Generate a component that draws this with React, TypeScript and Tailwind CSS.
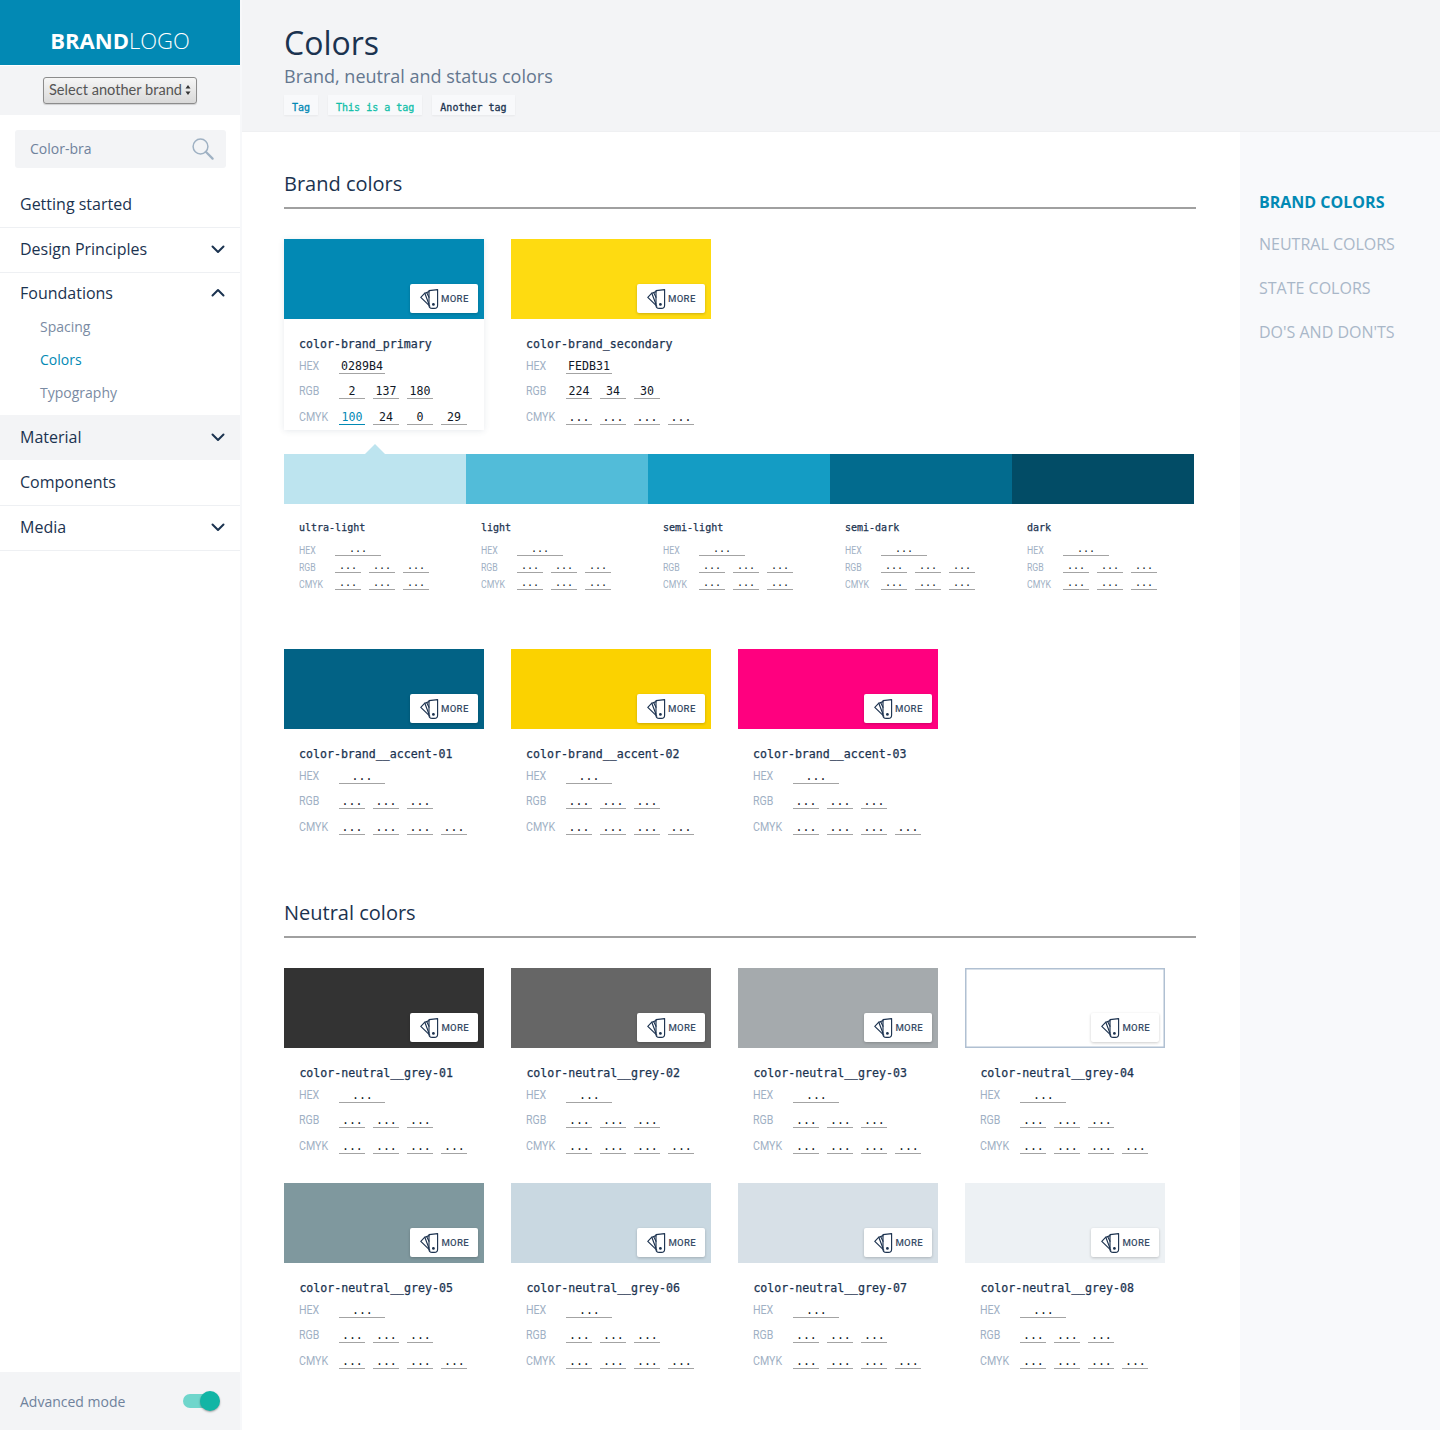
const NAVY = "text-[#1b3350]";

function FanIcon() {
  return (
    <svg width="19" height="20" viewBox="0 0 19 20" fill="none" stroke="#1d3350" strokeWidth="1.15" strokeLinejoin="round" strokeLinecap="round" className="shrink-0">
      <path d="M9 1.6 17.6.6v15.6a3.2 3.2 0 0 1-3.2 3.2h-2.2A3.2 3.2 0 0 1 9 16.2z" />
      <path d="M9 2.6 4.8 4.2l4.2 11" />
      <path d="M4.8 4.2.8 8.4l9 8.8" />
      <path d="M6.6 3.6 9 8.2" />
      <circle cx="13.4" cy="15.4" r="1.4" fill="#1d3350" stroke="none" />
    </svg>
  );
}

function MoreButton() {
  return (
    <div className="absolute right-[6px] bottom-[6px] flex h-[29px] w-[68px] items-center gap-[2px] rounded-[2px] bg-white pl-[10px] shadow-[0_1px_3px_rgba(0,0,0,0.2)]">
      <FanIcon />
      <span className="pt-px font-['Roboto',sans-serif] text-[9.6px] font-medium tracking-[0.3px] text-[#3a4e68]">MORE</span>
    </div>
  );
}

function Cell({ v, wide, small, active }: { v: string; wide?: boolean; small?: boolean; active?: boolean }) {
  const w = wide ? "w-[46px]" : "w-[26px]";
  const color = active ? "text-[#0289b4] border-[#0289b4]" : "text-[#111827] border-[#a3a3a3]";
  const size = small ? "text-[10px] h-[12px] leading-[10px]" : "text-[11.6px] h-[15px] leading-[15px]";
  return <span className={`${w} ${color} ${size} block border-b text-center font-['DejaVu_Sans_Mono',monospace] whitespace-nowrap`}>{v}</span>;
}

function Row({ label, values, small, activeFirst }: { label: string; values: string[]; small?: boolean; activeFirst?: boolean }) {
  return (
    <div className={`flex items-center ${small ? "h-[17px]" : "h-[25.5px]"}`}>
      <span className={`${small ? "w-[36px] origin-left scale-x-[0.83] pt-[2px] text-[10.5px]" : "w-[40px] origin-left scale-x-[0.85] text-[12.5px]"} font-['Roboto',sans-serif] text-[#a0b0c4]`}>{label}</span>
      <div className="flex gap-2">
        {values.map((v, i) => (
          <Cell key={i} v={v} small={small} wide={label === "HEX"} active={activeFirst && label === "CMYK" && i === 0} />
        ))}
      </div>
    </div>
  );
}

type CardProps = {
  name: string;
  color: string;
  hex?: string;
  rgb?: string[];
  cmyk?: string[];
  selected?: boolean;
  bordered?: boolean;
};

function Card({ name, color, hex = "...", rgb = ["...", "...", "..."], cmyk = ["...", "...", "...", "..."], selected, bordered }: CardProps) {
  return (
    <div className={`w-[200px] ${selected ? "shadow-[0_1px_6px_rgba(60,80,110,0.12)]" : ""}`}>
      <div className={`relative h-[80px] ${color} ${bordered ? "shadow-[inset_0_0_0_1.5px_#b0c0d2]" : ""}`}>
        <MoreButton />
      </div>
      <div className="h-[111px] pl-[15px] pt-[15px]">
        <div className={`h-[19.5px] font-['DejaVu_Sans_Mono',monospace] text-[11.6px] leading-[21px] [-webkit-text-stroke:0.25px_#1b3350] ${NAVY}`}>{name}</div>
        <Row label="HEX" values={[hex]} />
        <Row label="RGB" values={rgb} />
        <Row label="CMYK" values={cmyk} activeFirst={selected} />
      </div>
    </div>
  );
}

function Shade({ name, color }: { name: string; color: string }) {
  return (
    <div className="w-[182px]">
      <div className={`h-[50px] ${color}`} />
      <div className="pl-[15px] pt-[15px]">
        <div className={`mb-[6.5px] h-4 font-['DejaVu_Sans_Mono',monospace] text-[10px] leading-[18px] [-webkit-text-stroke:0.25px_#1b3350] ${NAVY}`}>{name}</div>
        <Row small label="HEX" values={["..."]} />
        <Row small label="RGB" values={["...", "...", "..."]} />
        <Row small label="CMYK" values={["...", "...", "..."]} />
      </div>
    </div>
  );
}

function SectionTitle({ children }: { children: string }) {
  return (
    <div className="w-[912px] border-b-2 border-[#a0a0a0] pb-[9px]">
      <h2 className={`h-7 text-[20px] leading-7 ${NAVY}`}>{children}</h2>
    </div>
  );
}

function Chevron({ up }: { up?: boolean }) {
  return (
    <svg width="14" height="9" viewBox="0 0 14 9" fill="none" stroke="#1b3350" strokeWidth="2" strokeLinecap="round" strokeLinejoin="round" className="shrink-0">
      <path d={up ? "M1.5 7.5 7 2l5.5 5.5" : "M1.5 1.5 7 7l5.5-5.5"} />
    </svg>
  );
}

function NavRow({ label, chevron, h = "h-[45px]" }: { label: string; chevron?: boolean; h?: string }) {
  return (
    <div className={`flex ${h} items-center justify-between border-b border-[#eef0f3] pl-5 pr-[15px] pb-px text-[16px] ${NAVY}`}>
      <span className={chevron ? "pb-[2px]" : ""}>{label}</span>
      {chevron && <Chevron />}
    </div>
  );
}

export default function App() {
  return (
    <div className="flex h-[1430px] overflow-hidden bg-white font-['Open_Sans',sans-serif]">
      <aside className="z-10 flex w-[242px] shrink-0 flex-col border-r-2 border-[#f7f8fa]">
        <div className="flex h-[65px] items-end justify-center bg-[#0289b4] pb-[10px] text-[22px] leading-[30px] text-white">
          <span className="font-bold">BRAND</span>
          <span className="font-light">LOGO</span>
        </div>
        <div className="flex h-[50px] items-center justify-center border-t border-white bg-[#f3f4f6]">
          <div className="flex h-[27px] w-[154px] items-center justify-between rounded-[3px] border border-[#8c8c8c] bg-gradient-to-b from-[#f6f6f6] to-[#d9d9d9] pb-[2px] pl-[5px] pr-[5px] font-['Lato',sans-serif] text-[14.6px] text-[#555] shadow-[0_1px_1px_rgba(0,0,0,0.15)]">
            <span className="whitespace-nowrap">Select another brand</span>
            <svg width="6" height="12" viewBox="0 0 6 12" fill="#333">
              <path d="M3 1 5.5 4.5H.5zM3 11 .5 7.5h5z" />
            </svg>
          </div>
        </div>
        <div className="px-[15px] pt-[15px]">
          <div className="flex h-[38px] w-[211px] items-center justify-between rounded-[3px] bg-[#f3f4f6] pl-[15px] pr-[12px] text-[14px] text-[#6f829c]">
            <span className="pb-[2px]">Color-bra</span>
            <svg width="22" height="22" viewBox="0 0 22 22" fill="none" stroke="#9fb1c3" strokeLinecap="round">
              <circle cx="8.5" cy="8.5" r="7.4" strokeWidth="1.5" />
              <path d="M13.8 13.8 20.6 20.6" strokeWidth="2.2" />
            </svg>
          </div>
        </div>
        <div className="mt-[14px]">
          <NavRow label="Getting started" h="h-[46px]" />
          <NavRow label="Design Principles" chevron />
          <div className={`flex h-[37px] items-center justify-between pl-5 pr-[15px] pt-[2px] text-[16px] ${NAVY}`}>
            <span>Foundations</span>
            <Chevron up />
          </div>
          <div className="flex h-[105px] flex-col pl-10 text-[14px] text-[#7a8ba3]">
            <span className="flex h-[33px] items-center">Spacing</span>
            <span className="flex h-[33px] items-center text-[#0289b4]">Colors</span>
            <span className="flex h-[33px] items-center">Typography</span>
          </div>
          <div className={`flex h-[45px] items-center justify-between bg-[#f3f4f6] pl-5 pr-[15px] text-[16px] ${NAVY}`}>
            <span className="pb-[2px]">Material</span>
            <Chevron />
          </div>
          <NavRow label="Components" h="h-[46px]" />
          <NavRow label="Media" chevron />
        </div>
        <div className="mt-auto flex h-[58px] items-center justify-between bg-[#f3f4f6] pl-5 pr-[23px] text-[14px] text-[#6f829c]">
          <span>Advanced mode</span>
          <div className="relative h-[14px] w-[34px] rounded-full bg-[#6fd6cc]">
            <div className="absolute -top-[3px] right-[-3px] h-5 w-5 rounded-full bg-[#12b5a5] shadow-[0_1px_2px_rgba(0,0,0,0.35)]" />
          </div>
        </div>
      </aside>

      <main className="flex min-w-0 flex-1 flex-col">
        <header className="h-[132px] shrink-0 border-b border-[#eff0f2] bg-[#f3f4f6] pl-[42px] pt-[21px]">
          <h1 className={`h-[44px] text-[32px] leading-[44px] ${NAVY}`}>Colors</h1>
          <p className="h-[26px] text-[18px] leading-[22px] text-[#64778f]">Brand, neutral and status colors</p>
          <div className="mt-[4px] flex gap-[10px] font-['DejaVu_Sans_Mono',monospace] text-[10px] leading-[26px] [-webkit-text-stroke:0.3px_currentColor]">
            <span className="h-5 bg-[#f8f9fb] px-2 text-[#0289b4] shadow-[0_1px_2px_rgba(0,0,0,0.05)]">Tag</span>
            <span className="h-5 bg-[#f8f9fb] px-2 text-[#12bfa9] shadow-[0_1px_2px_rgba(0,0,0,0.05)]">This is a tag</span>
            <span className={`h-5 bg-[#f8f9fb] px-2 ${NAVY} shadow-[0_1px_2px_rgba(0,0,0,0.05)]`}>Another tag</span>
          </div>
        </header>

        <div className="flex min-h-0 flex-1">
          <div className="w-[998px] shrink-0 pl-[42px] pt-[38px]">
            <SectionTitle>Brand colors</SectionTitle>
            <div className="mt-[30px] flex gap-[27px]">
              <Card selected name="color-brand_primary" color="bg-[#0289b4]" hex="0289B4" rgb={["2", "137", "180"]} cmyk={["100", "24", "0", "29"]} />
              <Card name="color-brand_secondary" color="bg-[#fedb11]" hex="FEDB31" rgb={["224", "34", "30"]} />
            </div>
            <div className="relative mt-[24px] flex w-[910px]">
              <div className="absolute -top-[10px] left-[81px] h-0 w-0 border-x-[10px] border-b-[10px] border-x-transparent border-b-[#bde4ef]" />
              <Shade name="ultra-light" color="bg-[#bde4ef]" />
              <Shade name="light" color="bg-[#52bcd9]" />
              <Shade name="semi-light" color="bg-[#149cc4]" />
              <Shade name="semi-dark" color="bg-[#026b8e]" />
              <Shade name="dark" color="bg-[#024c66]" />
            </div>
            <div className="mt-[56.5px] flex gap-[27px]">
              <Card name="color-brand__accent-01" color="bg-[#026285]" />
              <Card name="color-brand__accent-02" color="bg-[#fbd200]" />
              <Card name="color-brand__accent-03" color="bg-[#ff007f]" />
            </div>

            <div className="mt-[59px]">
              <SectionTitle>Neutral colors</SectionTitle>
            </div>
            <div className="ml-[0.4px] mt-[30px] grid w-[890px] grid-cols-[repeat(4,200px)] gap-x-[27px] gap-y-[24px]">
              <Card name="color-neutral__grey-01" color="bg-[#333333]" />
              <Card name="color-neutral__grey-02" color="bg-[#666666]" />
              <Card name="color-neutral__grey-03" color="bg-[#a5aaad]" />
              <Card name="color-neutral__grey-04" color="bg-white" bordered />
              <Card name="color-neutral__grey-05" color="bg-[#7f989e]" />
              <Card name="color-neutral__grey-06" color="bg-[#c9d8e1]" />
              <Card name="color-neutral__grey-07" color="bg-[#d7e0e7]" />
              <Card name="color-neutral__grey-08" color="bg-[#edf1f4]" />
            </div>
          </div>

          <nav className="flex-1 bg-[#f8f9fb] pl-[19px] pt-[58px] text-[16px] uppercase text-[#a9b7c8]">
            <div className="flex h-[24px] items-center font-bold text-[#0289b4]">Brand colors</div>
            <div className="mt-[18px] flex h-[24px] items-center">Neutral colors</div>
            <div className="mt-[20px] flex h-[24px] items-center">State colors</div>
            <div className="mt-[20px] flex h-[24px] items-center whitespace-nowrap">Do's and don'ts</div>
          </nav>
        </div>
      </main>
    </div>
  );
}
